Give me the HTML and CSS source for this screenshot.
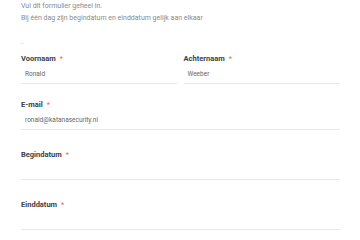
FILE: index.html
```html
<!DOCTYPE html>
<html>
<head>
<meta charset="utf-8">
<link rel="stylesheet" href="styles.css">
</head>
<body>
<div class="wrap">
  <div class="intro">
    <p>Vul dit formulier geheel in.</p>
    <p>Bij één dag zijn begindatum en einddatum gelijk aan elkaar</p>
  </div>
  <div class="dot">.</div>
  <div class="row">
    <div class="field">
      <div class="label">Voornaam<span class="req">*</span></div>
      <div class="input">Ronald</div>
    </div>
    <div class="field">
      <div class="label">Achternaam<span class="req">*</span></div>
      <div class="input">Weeber</div>
    </div>
  </div>
  <div class="field gap">
    <div class="label">E-mail<span class="req">*</span></div>
    <div class="input">ronald@katanasecurity.nl</div>
  </div>
  <div class="field gap2">
    <div class="label">Begindatum<span class="req">*</span></div>
    <div class="input"></div>
  </div>
  <div class="field gap2">
    <div class="label">Einddatum<span class="req">*</span></div>
    <div class="input"></div>
  </div>
</div>
</body>
</html>
```
FILE: styles.css
```css
html, body {
  margin: 0;
  padding: 0;
  background: #fff;
}
body {
  font-family: Roboto, "Liberation Sans", sans-serif;
}
.wrap {
  width: 319px;
  margin-left: 21px;
}
.intro p {
  margin: 0;
  font-size: 7px;
  line-height: 12px;
  color: #8a8a8a;
}
.dot {
  margin-top: 12px;
  font-size: 7px;
  line-height: 12px;
  color: #8a8a8a;
}
.row {
  display: grid;
  grid-template-columns: 1fr 1fr;
  column-gap: 6px;
  margin-top: 6px;
}
.field {
  display: flex;
  flex-direction: column;
}
.gap {
  margin-top: 16px;
}
.gap2 {
  margin-top: 20px;
}
.label {
  font-size: 7.5px;
  font-weight: 700;
  line-height: 10px;
  color: #3b4147;
  margin-bottom: 4px;
}
.req {
  color: #f06060;
  margin-left: 4px;
  font-weight: 400;
}
.input {
  height: 12px;
  padding: 0 4px 3px;
  font-size: 6.5px;
  line-height: 12px;
  color: #666;
  border-bottom: 1px solid #e8e8e8;
}
```
